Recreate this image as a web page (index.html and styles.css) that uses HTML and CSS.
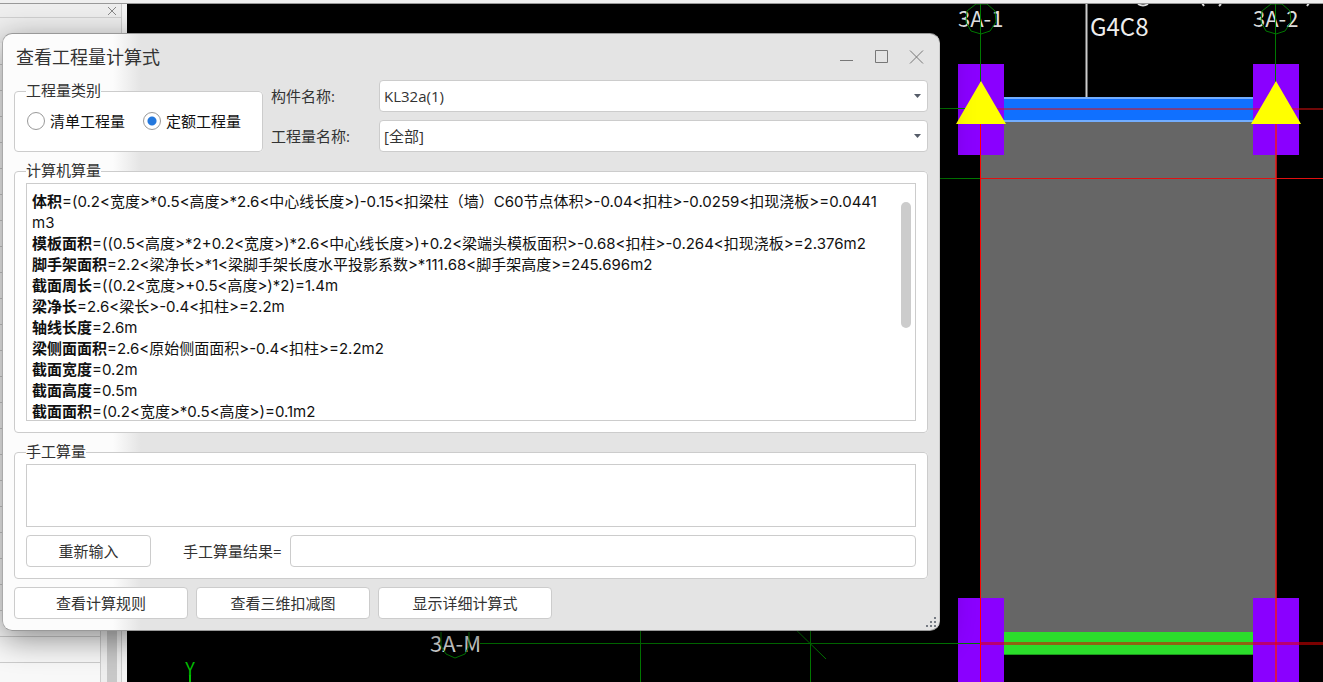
FILE: index.html
```html
<!DOCTYPE html>
<html lang="zh-CN">
<head>
<meta charset="utf-8">
<title>查看工程量计算式</title>
<link rel="stylesheet" href="styles.css">
</head>
<body>
<div class="workspace">
  <div class="ribbon"></div>
  <aside class="side-panel">
    <header class="side-header">
      <button class="side-close" type="button" aria-label="关闭面板">
        <svg viewBox="0 0 10 10" width="10" height="10"><path d="M1 1L9 9M9 1L1 9"/></svg>
      </button>
    </header>
    <div class="side-body">
      <div class="side-rows"></div>
      <div class="side-scroll"></div>
    </div>
  </aside>
  <main class="viewport">
    <svg class="drawing" viewBox="127 4 1196 678" preserveAspectRatio="xMinYMin slice">
      <rect x="981" y="122" width="295" height="511" fill="#666"/>
      <rect x="958" y="64" width="46" height="91" fill="#8a00ff"/>
      <rect x="1253" y="64" width="46" height="91" fill="#8a00ff"/>
      <rect x="958" y="598" width="46" height="84" fill="#8a00ff"/>
      <rect x="1253" y="598" width="46" height="84" fill="#8a00ff"/>
      <rect x="1004" y="97" width="249" height="25" fill="#72adff"/>
      <rect x="1004" y="99" width="249" height="21" fill="#1070ff"/>
      <rect x="1004" y="632" width="249" height="23" fill="#2bdd2b"/>
      <rect x="1004" y="654" width="249" height="1" fill="#1d991d"/>
      <text class="axis-label" x="958" y="27">3A-1</text>
      <text class="axis-label" x="1253" y="27">3A-2</text>
      <text class="axis-label" x="430" y="652">3A-M</text>
      <text class="beam-label" x="1090" y="36">G4C8</text>
      <g class="axis-green">
        <path d="M980.500 4V82M1275.500 4V82"/>
        <path d="M930 108.500H970M930 178.500H981M480 643.500H981"/>
        <path d="M640.500 620V682M810.500 620V682M786 620L826 659"/>
        <path d="M976 4L987 4L995 11L996 22L990 31L981 34L971 31L966 22L967 11Z"/>
        <path d="M1271 4L1282 4L1290 11L1291 22L1285 31L1276 34L1266 31L1261 22L1262 11Z"/>
        <path d="M441 632L441 646L446 654L455 658L465 654L469 646L469 632"/>
      </g>
      <g class="axis-red">
        <path d="M981 109H1323M981 178.500H1323"/>
        <path d="M980.500 124V682" stroke="#ff0000"/>
        <path d="M1276 124V682" stroke="#f01818" stroke-width="1.500"/>
      </g>
      <path d="M981 643.500H1323" stroke="#e00000" stroke-width="3" opacity=".55"/>
      <path d="M1086.500 4V97" stroke="#ccc" stroke-width="2"/>
      <path d="M981 81L1006 124H956ZM1276 81L1301 124H1251Z" fill="#ff0"/>
      <path class="clipped-note" d="M1138 4Q1143 7 1148 4M1202 3L1204 6M1221 4L1219 6M1309 3L1307 6"/>
      <text class="ucs-label" x="190" y="676" text-anchor="middle">Y</text>
      <path d="M190 675V682" stroke="#00c000" stroke-width="2"/>
    </svg>
  </main>

  <section class="dialog" role="dialog" aria-labelledby="dialog-title">
    <header class="title-bar">
      <h1 class="title" id="dialog-title">查看工程量计算式</h1>
      <button class="window-button" type="button" aria-label="最小化"><svg viewBox="0 0 15 15" width="15" height="15"><path d="M1 10.500H14"/></svg></button>
      <button class="window-button" type="button" aria-label="最大化"><svg viewBox="0 0 15 15" width="15" height="15"><path d="M1.500 .500H13.500V12.500H1.500Z"/></svg></button>
      <button class="window-button" type="button" aria-label="关闭"><svg viewBox="0 0 15 15" width="15" height="15"><path d="M1 .500L14 13.500M14 .500L1 13.500"/></svg></button>
    </header>
    <form class="content">
      <div class="top-row">
        <fieldset class="group">
          <legend>工程量类别</legend>
          <div class="radios">
            <label class="radio"><input type="radio" name="kind">清单工程量</label>
            <label class="radio"><input type="radio" name="kind" checked>定额工程量</label>
          </div>
        </fieldset>
        <div class="fields">
          <label for="member">构件名称:</label>
          <div class="combo">
            <select id="member"><option>KL32a(1)</option></select>
            <svg class="arrow" viewBox="0 0 7 4" width="7" height="4"><path d="M0 0H7L3.500 4Z"/></svg>
          </div>
          <label for="quantity">工程量名称:</label>
          <div class="combo">
            <select id="quantity"><option>[全部]</option></select>
            <svg class="arrow" viewBox="0 0 7 4" width="7" height="4"><path d="M0 0H7L3.500 4Z"/></svg>
          </div>
        </div>
      </div>

      <fieldset class="group">
        <legend>计算机算量</legend>
        <div class="result-frame">
          <div class="result" tabindex="0">
            <p><b>体积</b>=(0.2&lt;宽度&gt;*0.5&lt;高度&gt;*2.6&lt;中心线长度&gt;)-0.15&lt;扣梁柱（墙）C60节点体积&gt;-0.04&lt;扣柱&gt;-0.0259&lt;扣现浇板&gt;=0.0441<wbr>m3</p>
            <p><b>模板面积</b>=((0.5&lt;高度&gt;*2+0.2&lt;宽度&gt;)*2.6&lt;中心线长度&gt;)+0.2&lt;梁端头模板面积&gt;-0.68&lt;扣柱&gt;-0.264&lt;扣现浇板&gt;=2.376m2</p>
            <p><b>脚手架面积</b>=2.2&lt;梁净长&gt;*1&lt;梁脚手架长度水平投影系数&gt;*111.68&lt;脚手架高度&gt;=245.696m2</p>
            <p><b>截面周长</b>=((0.2&lt;宽度&gt;+0.5&lt;高度&gt;)*2)=1.4m</p>
            <p><b>梁净长</b>=2.6&lt;梁长&gt;-0.4&lt;扣柱&gt;=2.2m</p>
            <p><b>轴线长度</b>=2.6m</p>
            <p><b>梁侧面面积</b>=2.6&lt;原始侧面面积&gt;-0.4&lt;扣柱&gt;=2.2m2</p>
            <p><b>截面宽度</b>=0.2m</p>
            <p><b>截面高度</b>=0.5m</p>
            <p><b>截面面积</b>=(0.2&lt;宽度&gt;*0.5&lt;高度&gt;)=0.1m2</p>
          </div>
          <div class="thumb"></div>
        </div>
      </fieldset>

      <fieldset class="group">
        <legend>手工算量</legend>
        <textarea class="manual" aria-label="手工算量"></textarea>
        <div class="manual-row">
          <button class="button reset" type="button">重新输入</button>
          <label for="manual-result">手工算量结果=</label>
          <input class="manual-result" id="manual-result" type="text">
        </div>
      </fieldset>

      <div class="actions">
        <button class="button" type="button">查看计算规则</button>
        <button class="button" type="button">查看三维扣减图</button>
        <button class="button" type="button">显示详细计算式</button>
      </div>
    </form>
    <svg class="grip" viewBox="0 0 10 10" width="10" height="10"><path d="M8 0h2v2h-2zM4 4h2v2h-2zM8 4h2v2h-2zM0 8h2v2h-2zM4 8h2v2h-2zM8 8h2v2h-2z"/></svg>
  </section>
</div>
</body>
</html>
```

FILE: styles.css
```css
* { box-sizing: border-box; }

body {
  margin: 0;
  font: 15px/20px "Open Sans", "Noto Sans CJK SC", sans-serif;
  color: #333;
}

.workspace {
  position: relative;
  display: grid;
  grid-template: 4px 1fr / 127px 1fr;
  min-height: 100vh;
  overflow: hidden;
  background: #f4f4f4;
}

.ribbon {
  position: relative;
  z-index: 1;
  grid-column: 1 / -1;
  background: #efefef;
  border-bottom: 1px solid #999;
}

.side-panel {
  display: flex;
  flex-direction: column;
  margin-right: 5px;
  border-right: 1px solid #ccc;
  background: #eee;
}

.side-header {
  display: flex;
  justify-content: flex-end;
  align-items: center;
  height: 14px;
  padding-right: 4px;
  border-bottom: 1px solid #d0d0d0;
}

.side-close {
  display: flex;
  padding: 0;
  border: 0;
  background: none;
}

.side-close path { stroke: #888; stroke-width: 1; }

.side-body {
  display: flex;
  flex: 1;
  gap: 6px;
  margin-top: 25px;
}

.side-rows {
  width: 101px;
  border-right: 1px solid #ccc;
  background: repeating-linear-gradient(#f8f8f8 0 21px, #ccc 21px 22px, #f8f8f8 22px 26px);
}

.side-scroll { width: 10px; background: #c8c8c8; }

.viewport { position: relative; background: #000; }

.drawing {
  position: absolute;
  inset: 0;
  width: 100%;
  height: 100%;
  overflow: visible;
  fill: none;
  font-family: "Noto Sans CJK SC", sans-serif;
}

.axis-green { stroke: #007800; stroke-width: 1; }
.axis-red { stroke: #e01010; stroke-width: 1; }
.clipped-note { stroke: #ddd; stroke-width: 2; }
.axis-label { fill: #ddd; font-size: 22px; }
.beam-label { fill: #eee; font-size: 24px; }
.ucs-label { fill: #00c000; font-size: 18px; }

.dialog {
  position: absolute;
  top: 33px;
  left: 2px;
  right: 383px;
  border: 1px solid #aaa;
  border-color: #999 #ccc #999 #aaa;
  border-radius: 10px;
  background: linear-gradient(90deg, #fcfcfc 0 110px, #e4e4e4 138px);
  box-shadow: 0 8px 32px rgba(0, 0, 0, .45);
}

.title-bar {
  display: flex;
  align-items: center;
  height: 46px;
  padding: 0 5px 0 13px;
}

.title {
  flex: 1;
  margin: 0;
  font-size: 18px;
  font-weight: 400;
}

.window-button {
  display: flex;
  justify-content: center;
  width: 35px;
  padding: 0;
  border: 0;
  background: none;
}

.window-button path { fill: none; stroke: #777; }

.content {
  display: flex;
  flex-direction: column;
  gap: 8px;
  padding: 0 11px 11px;
}

.top-row {
  display: grid;
  grid-template-columns: 249px 1fr;
  gap: 8px;
}

.group {
  min-width: 0;
  margin: 0;
  padding: 1px 11px 11px;
  border: 1px solid #ccc;
  border-radius: 4px;
  background: #fff;
}

.group legend { padding: 0 0 2px; }

.radios { display: flex; gap: 18px; padding: 8px 0 0 1px; }

.radio { display: flex; align-items: center; gap: 5px; color: #111; }

.radio input {
  appearance: none;
  width: 18px;
  height: 18px;
  margin: 0;
  border: 1px solid #999;
  border-radius: 50%;
  background: #fff;
}

.radio input:checked { background: radial-gradient(circle, #2478dd 0 4px, #fff 5px); }

.fields {
  display: grid;
  grid-template-columns: 100px 1fr;
  gap: 8px;
  align-items: center;
}

.combo { position: relative; }

.combo select {
  display: block;
  appearance: none;
  width: 100%;
  height: 32px;
  padding: 0 20px 0 4px;
  border: 1px solid #ccc;
  border-radius: 4px;
  background: #fff;
  color: inherit;
  font: inherit;
}

.arrow {
  position: absolute;
  top: 14px;
  right: 7px;
  fill: #555c68;
  pointer-events: none;
}

.result-frame { position: relative; border: 1px solid #ccc; }

.result {
  height: 236px;
  padding: 7px 24px 0 5px;
  overflow-y: auto;
  scrollbar-width: none;
  color: #111;
  font-family: Inter, "Noto Sans CJK SC", sans-serif;
  line-height: 21px;
}

.result p { margin: 0; }

.thumb {
  position: absolute;
  top: 18px;
  right: 4px;
  width: 10px;
  height: 126px;
  border-radius: 5px;
  background: #ccc;
}

.manual {
  display: block;
  width: 100%;
  height: 63px;
  border: 1px solid #ccc;
  background: #fff;
  font: inherit;
  resize: none;
}

.manual-row {
  display: flex;
  align-items: center;
  gap: 8px;
  margin-top: 8px;
}

.manual-result {
  flex: 1;
  min-width: 0;
  height: 32px;
  border: 1px solid #ccc;
  border-radius: 4px;
  background: #fff;
  font: inherit;
}

.button {
  height: 32px;
  padding: 0;
  border: 1px solid #ccc;
  border-radius: 4px;
  background: #fff;
  color: inherit;
  font: inherit;
}

.reset { width: 125px; margin-right: 24px; }

.actions {
  display: grid;
  grid-template-columns: repeat(3, 174px);
  gap: 8px;
}

.grip {
  position: absolute;
  right: 3px;
  bottom: 3px;
  fill: #777c84;
}
```
